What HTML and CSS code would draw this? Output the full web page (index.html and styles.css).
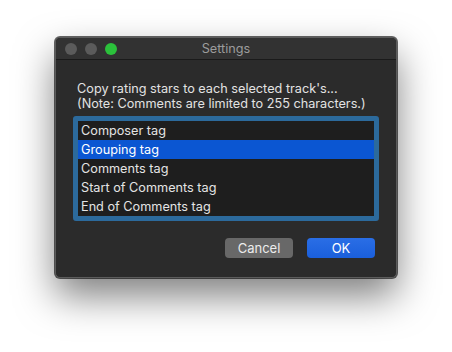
FILE: index.html
```html
<!DOCTYPE html>
<html lang="en">
<head>
    <meta charset="UTF-8">
    <title>Settings</title>
    <link rel="stylesheet" href="styles.css">
</head>
<body>
    <div class="window">
        <div class="titlebar">
            <div class="lights">
                <span class="light"></span>
                <span class="light"></span>
                <span class="light green"></span>
            </div>
            <div class="title">Settings</div>
        </div>
        <div class="content">
            <p class="prompt">Copy rating stars to each selected track's...<br>(Note: Comments are limited to 255 characters.)</p>
            <ul class="list">
                <li>Composer tag</li>
                <li class="selected">Grouping tag</li>
                <li>Comments tag</li>
                <li>Start of Comments tag</li>
                <li>End of Comments tag</li>
            </ul>
            <div class="buttons">
                <button class="btn cancel">Cancel</button>
                <button class="btn ok">OK</button>
            </div>
        </div>
    </div>
</body>
</html>
```

FILE: styles.css
```css
html {
    background: #ffffff;
}

body {
    margin: 0;
    min-height: 352px;
    box-sizing: border-box;
    padding: 37px 0 0 55px;
    font-family: Inter, "Liberation Sans", Arial, sans-serif;
    font-size: 12.7px;
}

.window {
    width: 340px;
    height: 239px;
    background: #2b2b2b;
    border: 1px solid #5c5c5c;
    border-radius: 5px;
    box-shadow: 0 0 0 1px rgba(0, 0, 0, 0.6), 0 18px 38px rgba(0, 0, 0, 0.5);
    display: flex;
    flex-direction: column;
    overflow: hidden;
}

.titlebar {
    height: 21px;
    background: #323232;
    border-bottom: 1px solid #1a1a1a;
    display: flex;
    align-items: center;
    position: relative;
}

.lights {
    display: flex;
    gap: 8px;
    padding-left: 9px;
}

.light {
    width: 12px;
    height: 12px;
    border-radius: 50%;
    background: #5b5b5b;
}

.light.green {
    background: #2bc13b;
}

.title {
    position: absolute;
    left: 0;
    right: 0;
    text-align: center;
    color: #9c9c9c;
    line-height: 21px;
}

.content {
    padding: 21px 21px 0 17px;
    display: flex;
    flex-direction: column;
}

.prompt {
    margin: 0 0 5px 4px;
    color: #e2e2e2;
    line-height: 15px;
}

.list {
    list-style: none;
    margin: 0;
    padding: 0;
    background: #1e1e1e;
    border: 5px solid #2c6a9c;
    border-radius: 3px;
    width: 296px;
}

.list li {
    height: 19px;
    line-height: 19px;
    padding-left: 3px;
    color: #e4e4e4;
}

.list li.selected {
    background: #0b56d2;
    color: #ffffff;
}

.buttons {
    display: flex;
    justify-content: flex-end;
    gap: 14px;
    margin-top: 17px;
}

.btn {
    width: 68px;
    height: 20px;
    border: none;
    border-radius: 4px;
    font-family: inherit;
    font-size: 13px;
    color: #ececec;
    padding: 0;
}

.cancel {
    background: #686868;
}

.ok {
    background: linear-gradient(#2a6ee6, #1a5fdc);
    color: #ffffff;
}
```
